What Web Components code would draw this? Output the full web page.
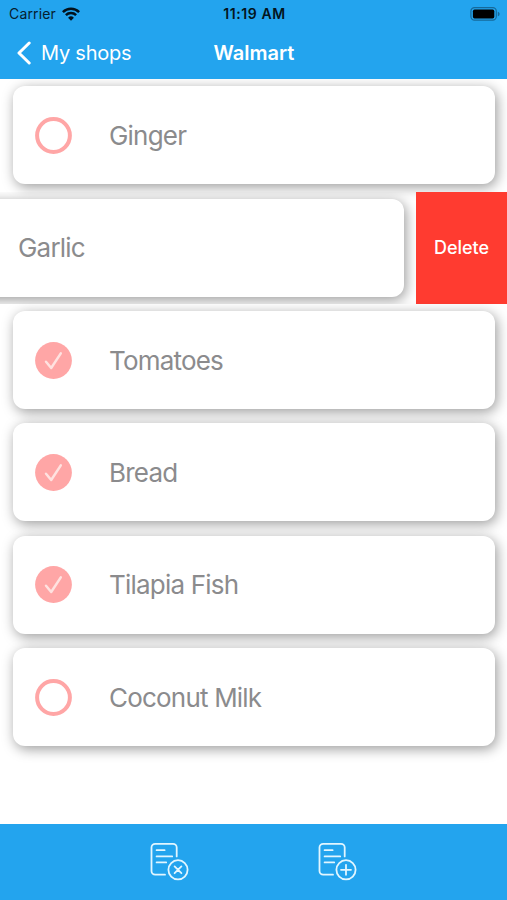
<!DOCTYPE html>
<html lang="en">
<head>
<meta charset="utf-8">
<meta name="viewport" content="width=device-width, initial-scale=1">
<title>Walmart</title>
<style>
    html, body {
        height: 100%;
        margin: 0;
    }
    body {
        background: #fff;
        font-family: Inter, "Liberation Sans", sans-serif;
        overflow: hidden;
    }
</style>
</head>
<body>
<shop-screen>
    <status-bar slot="header" carrier="Carrier" time="11:19 AM"></status-bar>
    <nav-bar slot="header" back="My shops">Walmart</nav-bar>
    <shop-item>Ginger</shop-item>
    <shop-item swiped>Garlic</shop-item>
    <shop-item checked>Tomatoes</shop-item>
    <shop-item checked>Bread</shop-item>
    <shop-item checked>Tilapia Fish</shop-item>
    <shop-item>Coconut Milk</shop-item>
    <tool-button slot="footer" icon="clear"></tool-button>
    <tool-button slot="footer" icon="add"></tool-button>
</shop-screen>

<script>
((window) => {

    class ShopScreen extends HTMLElement {
        constructor() {
            super();
            this.attachShadow({ mode: 'open' }).innerHTML = `
            <style>
                :host {
                    display: flex;
                    flex-direction: column;
                    height: 100vh;
                }
                header {
                    height: 79.3px;
                    flex: none;
                    background: #23a4ee;
                }
                main {
                    flex: 1;
                    min-height: 0;
                    overflow: hidden;
                }
                footer {
                    display: grid;
                    grid-template-columns: 168px 168px;
                    justify-content: center;
                    justify-items: center;
                    box-sizing: border-box;
                    height: 75.7px;
                    padding-top: 17.7px;
                    flex: none;
                    background: #23a4ee;
                }
            </style>
            <header><slot name="header"></slot></header>
            <main><slot></slot></main>
            <footer><slot name="footer"></slot></footer>`;
        }
    }

    /**
     * StatusBar
     */
    class StatusBar extends HTMLElement {
        constructor() {
            super();
            this.shadow = this.attachShadow({ mode: 'open' });
        }

        connectedCallback() {
            this.render();
        }

        render() {
            this.shadow.innerHTML = `
            <style>
                :host {
                    display: grid;
                    grid-template-columns: 1fr auto 1fr;
                    align-items: center;
                    height: 27px;
                    padding: 0 7px 0 9px;
                    color: #06202f;
                    font-size: 14px;
                    line-height: 27px;
                }
                .carrier {
                    display: flex;
                    align-items: center;
                    gap: 6px;
                    letter-spacing: 0.15px;
                }
                .time {
                    color: #031520;
                    font-weight: 600;
                    letter-spacing: 0.6px;
                }
                .battery {
                    justify-self: end;
                }
                svg {
                    display: block;
                }
            </style>
            <div class="carrier">
                <span>${this.getAttribute('carrier')}</span>
                <svg width="18" height="14" viewBox="0 0 18 14" fill="none" stroke="#02121c" stroke-width="2.5">
                    <path d="M.9 5.1a11.5 11.5 0 0 1 16.2 0M3.9 8.2a7.2 7.2 0 0 1 10.2 0"/>
                    <path d="M9 13.8 6.1 10.8a4.1 4.1 0 0 1 5.8 0z" fill="#02121c" stroke="none"/>
                </svg>
            </div>
            <span class="time">${this.getAttribute('time')}</span>
            <svg class="battery" width="30" height="14" viewBox="0 0 30 14">
                <rect x=".9" y=".6" width="25.4" height="12.6" rx="3.6" fill="none" stroke="#16699a" stroke-width="1.2"/>
                <rect x="2.9" y="2.6" width="21.4" height="8.8" rx="1.6" fill="#000"/>
                <path d="M27.8 4.7v4.6c1.1-.4 1.8-1.2 1.8-2.3s-.7-1.9-1.8-2.3z" fill="#16699a"/>
            </svg>`;
        }
    }

    /**
     * NavBar - back link and centered title
     */
    class NavBar extends HTMLElement {
        constructor() {
            super();
            this.shadow = this.attachShadow({ mode: 'open' });
        }

        connectedCallback() {
            this.render();
        }

        render() {
            this.shadow.innerHTML = `
            <style>
                :host {
                    display: grid;
                    grid-template-columns: 1fr auto 1fr;
                    align-items: center;
                    height: 51px;
                    padding: 0 16px 0 17px;
                    color: #fff;
                    font-size: 20px;
                }
                .back {
                    display: flex;
                    align-items: center;
                    gap: 10px;
                    letter-spacing: -0.22px;
                }
                .title {
                    font-weight: 600;
                    letter-spacing: 0;
                }
            </style>
            <div class="back">
                <svg width="14" height="24" viewBox="0 0 14 24" fill="none" stroke="#fff" stroke-width="3" stroke-linecap="round" stroke-linejoin="round">
                    <path d="M12.2 2 2 12l10.2 10"/>
                </svg>
                <span>${this.getAttribute('back')}</span>
            </div>
            <span class="title"><slot></slot></span>`;
        }
    }

    /**
     * ShopItem - one card; "swiped" slides it left to uncover Delete
     */
    class ShopItem extends HTMLElement {
        constructor() {
            super();
            this.shadow = this.attachShadow({ mode: 'open' });
        }

        static get observedAttributes() {
            return ['checked', 'swiped'];
        }

        attributeChangedCallback(name, oldValue, newValue) {
            this.render();
        }

        connectedCallback() {
            this.render();
        }

        render() {
            const mark = this.hasAttribute('checked')
                ? `<circle cx="18.5" cy="18.5" r="18.4" fill="#ffa6a6"/>
                   <path d="M11 19.8l5.2 6.2 9.6-14.6" fill="none" stroke="#ffe2e0" stroke-width="2.5" stroke-linecap="round" stroke-linejoin="round"/>`
                : '<circle cx="18.5" cy="18.5" r="16.4" fill="none" stroke="#ffa6a6" stroke-width="4"/>';
            const action = this.hasAttribute('swiped') ? '<button>Delete</button>' : '';

            this.shadow.innerHTML = `
            <style>
                :host {
                    display: flex;
                    box-sizing: border-box;
                    height: 112.4px;
                }
                :host([swiped]) {
                    justify-content: flex-end;
                    overflow: hidden;
                }
                .card {
                    display: flex;
                    align-items: center;
                    gap: 37px;
                    flex: none;
                    box-sizing: border-box;
                    width: 482px;
                    height: 98px;
                    margin: 7px 12px 0 13px;
                    padding: 0 22px;
                    border-radius: 12px;
                    background: #fff;
                    box-shadow: 2px 3px 13px rgba(0, 0, 0, .4);
                    color: #8b8b8d;
                    font-size: 26px;
                    letter-spacing: -0.8px;
                }
                svg {
                    display: block;
                    flex: none;
                }
                button {
                    flex: none;
                    width: 91px;
                    padding: 0;
                    border: 0;
                    background: #ff3b30;
                    color: #fff;
                    font: 500 18px Inter, "Liberation Sans", sans-serif;
                }
            </style>
            <div class="card">
                <svg width="37" height="37" viewBox="0 0 37 37">${mark}</svg>
                <span><slot></slot></span>
            </div>
            ${action}`;
        }
    }

    /**
     * ToolButton - list icon with a round badge
     */
    class ToolButton extends HTMLElement {
        constructor() {
            super();
            this.shadow = this.attachShadow({ mode: 'open' });
        }

        connectedCallback() {
            this.render();
        }

        render() {
            const badge = this.getAttribute('icon') === 'add'
                ? 'M28 22.8v10M23 27.8h10'
                : 'M24.6 24.4l6.8 6.8M31.4 24.4l-6.8 6.8';

            this.shadow.innerHTML = `
            <style>
                :host {
                    display: block;
                }
                svg {
                    display: block;
                }
            </style>
            <svg width="39" height="39" viewBox="0 0 39 39" fill="none" stroke="#e2f6ff" stroke-width="1.8" stroke-linecap="round" stroke-linejoin="round">
                <path d="M15 32.7H5.2A3.7 3.7 0 0 1 1.5 29V5.6A3.7 3.7 0 0 1 5.2 1.9H23a3.7 3.7 0 0 1 3.7 3.7v8.8"/>
                <path d="M6.6 8.2h8M6.6 14.4h15.6M6.6 20.4h9.6"/>
                <circle cx="28" cy="27.8" r="9.6"/>
                <path d="${badge}"/>
            </svg>`;
        }
    }

    if ('customElements' in window) {
        window.customElements.define('shop-screen', ShopScreen);
        window.customElements.define('status-bar', StatusBar);
        window.customElements.define('nav-bar', NavBar);
        window.customElements.define('shop-item', ShopItem);
        window.customElements.define('tool-button', ToolButton);
    }
})(window || this);
</script>
</body>
</html>
